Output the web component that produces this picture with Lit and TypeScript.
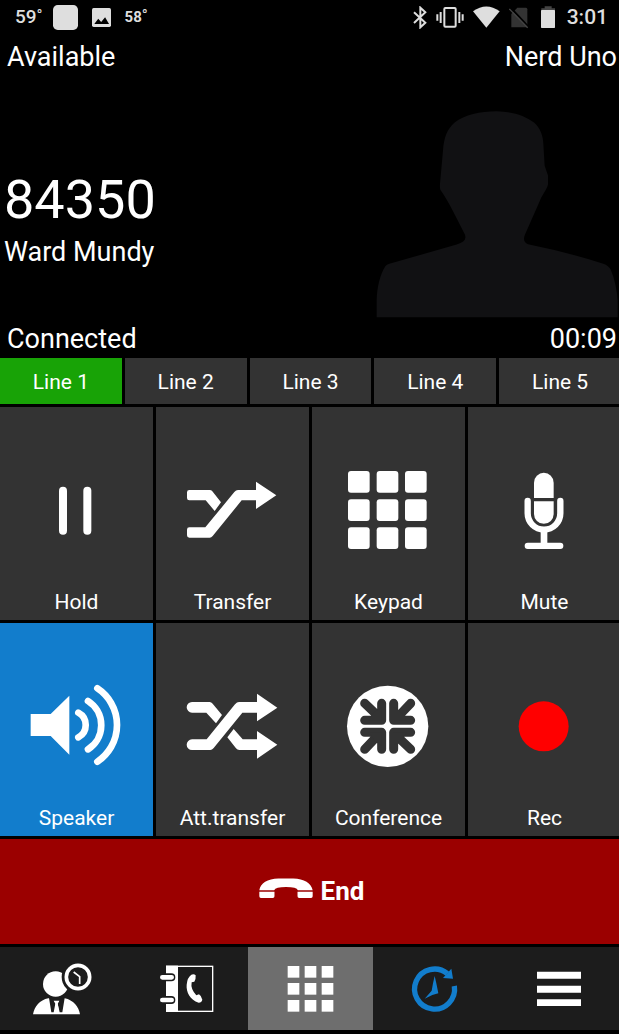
import { LitElement, html, css, svg } from "lit";
import { customElement, state } from "lit/decorators.js";

const icon = (viewBox: string, width: number, height: number, body: unknown) =>
  html`<svg class="icon" aria-hidden="true" viewBox=${viewBox} width=${width} height=${height}>${body}</svg>`;

const grid = (xs: number[], ys: number[], size: number, r: number) =>
  ys.map((y) => xs.map((x) => svg`<rect x=${x} y=${y} width=${size} height=${size} rx=${r} fill="#fff"/>`));

const arrows = [0, 90, 180, 270].map(
  (a) => svg`<g transform="rotate(${a} 234 169)">
    <path d="M165 100L206 139M216 100V151H165" fill="none" stroke="#333" stroke-width="27" stroke-linecap="round" stroke-linejoin="round"/>
    <path d="M190 130L216 112V151H176Z" fill="#333"/>
  </g>`
);

const tiles = [
  { label: "Hold", art: icon("87 6 288 288", 96, 96, svg`<g fill="#fff"><rect x="177" y="80" width="24" height="144" rx="12"/><rect x="250" y="80" width="24" height="144" rx="12"/></g>`) },
  { label: "Transfer", art: icon("555 6 288 288", 96, 96, svg`<g fill="#fff"><path d="M568 90H629Q634 90 637 94L663 127L644 153L617 121H568Q561 121 561 114V97Q561 90 568 90Z"/><path d="M568 202H616L703 96Q708 90 714 90H768V65L829 106L768 147V121H725L638 228Q634 233 629 233H568Q561 233 561 226V209Q561 202 568 202Z"/></g>`) },
  { label: "Keypad", art: icon("94 6 288 288", 96, 96, grid([115, 201, 286], [33, 118, 202], 65, 9)) },
  { label: "Mute", art: icon("562 6 288 288", 96, 96, svg`<g fill="#fff"><path d="M673 114V68a29.500 29.500 0 0 1 59 0V114Z"/><path d="M673 124H732V162a29.500 29.500 0 0 1-59 0Z"/><path d="M654 123V160a49 49 0 0 0 98 0V123" fill="none" stroke="#fff" stroke-width="19" stroke-linecap="round"/><rect x="693" y="208" width="20" height="45"/><rect x="645" y="248" width="116" height="19" rx="9"/></g>`) },
  { label: "Speaker", art: icon("87 24 288 288", 96, 96, svg`<path d="M92 132H152L208 77V254L152 198H92Z" fill="#fff"/><g fill="none" stroke="#fff" stroke-width="20" stroke-linecap="round"><path d="M235 128A42 42 0 0 1 235 202"/><path d="M264 93A86 86 0 0 1 264 238"/><path d="M292 55A132 132 0 0 1 292 275"/></g>`) },
  { label: "Att.transfer", art: icon("555 24 288 288", 96, 96, svg`<g fill="#fff"><path d="M576 96H629Q634 96 638 101L666 135L648 160L619 128H576A16 16 0 0 1 576 96Z"/><path d="M576 208H620L705 103Q711 96 717 96H771V71L832 113L771 154V128H727L641 234Q636 240 631 240H576A16 16 0 0 1 576 208Z"/><path d="M701 177L728 208H771V183L832 224L771 266V240H718Q712 240 708 235L682 202Z"/></g>`) },
  { label: "Conference", art: icon("94 24 288 288", 96, 96, svg`<circle cx="234" cy="169" r="122" fill="#fff"/>${arrows}`) },
  { label: "Rec", art: icon("562 24 288 288", 96, 96, svg`<circle cx="702" cy="169" r="75" fill="#f00"/>`) },
];

const navItems = [
  { label: "Presence", art: icon("66 85 240 180", 80, 60, svg`
    <circle cx="167" cy="160" r="38" fill="#fff"/>
    <path d="M99 251C103 228 119 208 145 203H194C220 208 236 228 240 251Z" fill="#fff"/>
    <path d="M147 202L154 245H161L166 219L161 210H178L173 219L179 245H187L194 202Z" fill="#1c1c1c"/>
    <path d="M163 211H177L173 218L177 244H164L167 218Z" fill="#fff"/>
    <circle cx="234" cy="139" r="49" fill="#1c1c1c"/>
    <circle cx="234" cy="139" r="35" fill="none" stroke="#fff" stroke-width="11"/>
    <path d="M221 124L239 138V160" fill="none" stroke="#fff" stroke-width="5"/>`) },
  { label: "Contacts", art: icon("438 85 240 180", 80, 60, svg`
    <rect x="500" y="107" width="138" height="135" fill="none" stroke="#fff" stroke-width="4"/>
    <rect x="498" y="105" width="36" height="138" fill="#fff"/>
    <g fill="none" stroke-linecap="round"><path d="M496 140H514M496 208H514" stroke="#1c1c1c" stroke-width="24"/><path d="M487 140H515M487 208H515" stroke="#fff" stroke-width="14"/></g>
    <path d="M574 132Q582 129 587 134Q588 145 583 153L575 155Q571 175 589 194L597 191Q605 196 607 207Q605 216 596 216C570 208 558 184 560 162Q562 140 574 132Z" fill="#fff"/>`) },
  { label: "Dialer", art: icon("60 85 240 180", 80, 60, grid([113, 164, 215], [106, 157, 208], 35, 0)) },
  { label: "History", art: icon("435 85 240 180", 80, 60, svg`
    <path d="M613 166A60 60 0 1 1 592 129" fill="none" stroke="#127dcc" stroke-width="16"/>
    <path d="M604 114L609 144L579 142Z" fill="#127dcc"/>
    <path d="M554 136L559 158L565 188L547 193L524 204L545 180L549 158Z" fill="#127dcc"/>`) },
  { label: "Menu", art: icon("807 85 240 180", 80, 60, svg`<path d="M861 123H993V144H861ZM861 165H993V186H861ZM861 206H993V226H861Z" fill="#fff"/>`) },
];

@customElement("app-root")
export class AppRoot extends LitElement {
  static styles = css`
    :host {
      display: block;
      font-family: Roboto, "Liberation Sans", sans-serif;
      color: #fff;
      background: #000;
      overflow: hidden;
    }
    .page { display: flex; flex-direction: column; min-height: 100vh; box-sizing: border-box; padding-bottom: 4px; }
    .icon { display: block; flex: none; }
    button { font: inherit; color: inherit; border: 0; margin: 0; padding: 0; border-radius: 0; cursor: pointer; }

    .status { display: flex; justify-content: space-between; align-items: center; height: 34px; padding: 0 11px 0 15px; color: #dedede; font-weight: 500; }
    .group { display: flex; align-items: center; }
    .left { gap: 10px; }
    .left .icon { margin-right: 4px; }
    .right { gap: 9px; }
    .temp { display: flex; font-size: 19px; line-height: 20px; font-weight: 500; }
    .temp.small { font-size: 15px; font-weight: 700; }
    .degree { font-size: 16px; line-height: 18px; font-weight: 400; }
    .clock { font-size: 21px; line-height: 24px; }

    .row { display: flex; justify-content: space-between; font-size: 27px; line-height: 32px; padding: 0 2px 0 7px; }
    .account { padding-top: 7px; }
    .state { padding-bottom: 3px; }
    .caller { flex: 1; display: flex; justify-content: space-between; align-items: center; padding: 38px 0 5px 4px; }
    .who { padding-top: 7px; }
    .number { margin: 0 0 4px; font-size: 54px; line-height: 64px; font-weight: 400; }
    .name { margin: 0; font-size: 27px; line-height: 32px; }

    .deck { display: flex; flex-direction: column; gap: 3px; margin-right: -2px; }
    .lines { display: grid; grid-template-columns: repeat(5, 1fr); gap: 3px; }
    .line { height: 46px; padding-top: 1px; background: #333; font-size: 21px; line-height: 26px; }
    .line.active { background: #18a306; }
    .tiles { display: grid; grid-template-columns: repeat(4, 1fr); gap: 3px; }
    .tile { display: flex; flex-direction: column; align-items: center; gap: 31px; padding: 55px 0 5px; background: #333; font-size: 21px; line-height: 26px; }
    .tile.active { background: #127dcc; }
    .end { display: flex; justify-content: center; align-items: center; gap: 8px; height: 105px; padding: 0 0 2px 2px; background: #9b0000; font-size: 26px; font-weight: 700; line-height: 32px; }
    .nav { display: grid; grid-template-columns: repeat(5, 1fr); }
    .tab { display: flex; justify-content: center; align-items: center; height: 83px; background: #1c1c1c; }
    .tab.active { background: #6e6e6e; }
  `;

  @state() private line = 1;
  @state() private speaker = true;
  @state() private section = "Dialer";

  render() {
    return html`<div class="page">
      <div class="status">
        <div class="group left">
          <span class="temp">59<span class="degree">°</span></span>
          ${icon("154 13 74 74", 25, 25, svg`<rect x="154" y="13" width="74" height="74" rx="14" fill="#dedede"/>`)}
          ${icon("271 20 58 58", 19, 19, svg`<rect x="271" y="20" width="58" height="58" rx="5" fill="#dedede"/><path d="M278 69L290 53L299 63L311 48L323 69Z" fill="#000"/>`)}
          <span class="temp small">58<span class="degree">°</span></span>
        </div>
        <div class="group right">
          ${icon("39 15 42 69", 14, 23, svg`<path d="M42 34L76 65L61 79V20L76 34L42 66" fill="none" stroke="#dedede" stroke-width="6"/>`)}
          ${icon("111 15 84 69", 28, 23, svg`<rect x="136" y="21" width="34" height="56" rx="3" fill="none" stroke="#dedede" stroke-width="6"/><path d="M125 33V66M115 40V59M181 33V66M191 40V59" stroke="#dedede" stroke-width="6"/>`)}
          ${icon("219 15 81 69", 27, 23, svg`<path d="M219 31Q259 2 299 31L259 80Z" fill="#dedede"/>`)}
          ${icon("327 15 60 69", 20, 23, svg`<path d="M352 20H378Q382 20 382 25V79H334V39Z" fill="#333"/><path d="M332 20L386 78" stroke="#000" stroke-width="6"/><path d="M328 24L383 80" stroke="#444" stroke-width="4"/>`)}
          ${icon("417 15 60 69", 20, 23, svg`<path d="M437 16H458V22H468V30H427V22H437Z" fill="#444"/><rect x="426" y="27" width="42" height="54" rx="2" fill="#dedede"/>`)}
          <span class="clock">3:01</span>
        </div>
      </div>

      <div class="row account"><span>Available</span><span>Nerd Uno</span></div>
      <div class="caller">
        <div class="who">
          <h1 class="number">84350</h1>
          <p class="name">Ward Mundy</p>
        </div>
        ${icon("48 32 729 620", 243, 207, svg`<path d="M50 650V600C51 560 60 522 76 497Q80 492 88 490L290 432Q316 424 316 412Q317 405 312 397C295 365 268 306 241 268Q239 262 240 250L249 150C252 108 262 86 284 66C314 42 360 32 410 32C458 34 494 45 522 66C542 84 549 106 550 130L554 196L564 225V252C560 268 548 280 540 300L495 402Q486 424 504 431Q620 454 730 490Q746 496 752 507C764 535 771 570 773 600V650Z" fill="#111113"/>`)}
      </div>
      <div class="row state"><span>Connected</span><span>00:09</span></div>

      <div class="deck">
        <div class="lines">
          ${[1, 2, 3, 4, 5].map((n) => html`<button class="line ${n === this.line ? "active" : ""}" @click=${() => (this.line = n)}>Line ${n}</button>`)}
        </div>
        <div class="tiles">
          ${tiles.map((t) => html`<button class="tile ${t.label === "Speaker" && this.speaker ? "active" : ""}"
            @click=${() => { if (t.label === "Speaker") this.speaker = !this.speaker; }}>${t.art}<span>${t.label}</span></button>`)}
        </div>
        <button class="end">
          ${icon("86 53 164 75", 54, 25, svg`<path d="M87 90C90 68 112 55 145 54H190C223 55 245 68 249 90H204Q201 80 168 80Q136 80 132 90Z" fill="#fff"/><path d="M87 94H133V108Q133 113 128 113H92Q87 113 87 108ZM203 94H249V108Q249 113 244 113H208Q203 113 203 108Z" fill="#fff"/>`)}
          <span>End</span>
        </button>
        <nav class="nav">
          ${navItems.map((n) => html`<button class="tab ${n.label === this.section ? "active" : ""}" aria-label=${n.label} @click=${() => (this.section = n.label)}>${n.art}</button>`)}
        </nav>
      </div>
    </div>`;
  }
}
